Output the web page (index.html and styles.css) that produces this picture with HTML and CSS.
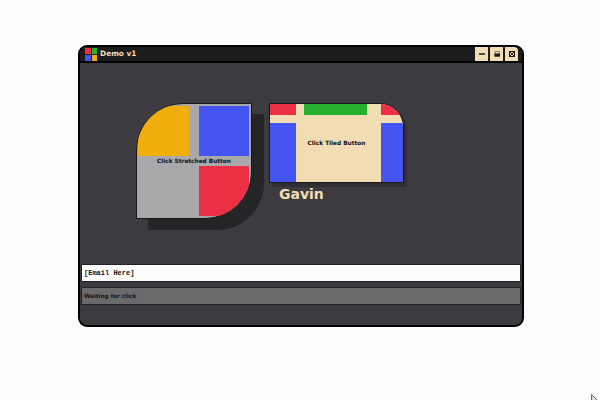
FILE: index.html
```
<!DOCTYPE html>
<html lang="en">
<head>
<meta charset="utf-8">
<title>Demo v1</title>
<link rel="stylesheet" href="styles.css">
</head>
<body>
<main class="window">
  <header class="titlebar">
    <span class="logo"><i class="red"></i><i class="green"></i><i class="blue"></i><i class="yellow"></i></span>
    <h1 class="title">Demo v1</h1>
    <div class="controls">
      <button class="control" aria-label="Minimize"><svg width="12" height="12" viewBox="0 0 12 12"><path d="M3 6h6" stroke="#1b1a18" stroke-width="1.6"/></svg></button>
      <button class="control" aria-label="Restore"><svg width="12" height="12" viewBox="0 0 12 12"><path d="M4 3.5h4.5v5H4z" fill="none" stroke="#8a7f69"/><path d="M3.5 5.5h5.5v3H3.5z" fill="#1b1a18"/></svg></button>
      <button class="control" aria-label="Close"><svg width="12" height="12" viewBox="0 0 12 12"><path d="M3.5 3.5h5v5h-5zM3 3l6 6M9 3l-6 6" fill="none" stroke="#1b1a18"/></svg></button>
    </div>
  </header>
  <section class="stage">
    <button class="stretched">
      <span class="yellow"></span><span class="blue"></span>
      <span class="caption">Click Stretched Button</span>
      <span></span><span class="red"></span>
    </button>
    <div class="column">
      <button class="tiled">
        <span class="red"></span><span class="green"></span><span class="red"></span>
        <span class="blue"></span><span class="caption">Click Tiled Button</span><span class="blue"></span>
      </button>
      <p class="name">Gavin</p>
    </div>
  </section>
  <div class="email">[Email Here]</div>
  <div class="status">Waiting for click</div>
</main>
<svg class="cursor" width="9" height="7" viewBox="0 0 9 7"><path d="M.5 7V.5L7 7" fill="#ddd" stroke="#666"/></svg>
</body>
</html>
```
FILE: styles.css
```
* {
  box-sizing: border-box;
}

body {
  margin: 0;
  height: 400px;
  padding: 45px 76px 0 78px;
  overflow: hidden;
  background: #fefdfe;
  font-family: "DejaVu Sans", sans-serif;
}

button {
  margin: 0;
  padding: 0;
  border: 0;
  font: inherit;
  color: inherit;
}

.red { background: #ec2f43; }
.green { background: #25b12e; }
.blue { background: #4555f1; }
.yellow { background: #f0ae0d; }

.window {
  height: 282px;
  border: 2px solid #020202;
  border-radius: 9px;
  background: #3e3b40;
  overflow: hidden;
}

.titlebar {
  display: flex;
  align-items: center;
  height: 16px;
  padding: 0 4px 0 5px;
  background: #1c1c1c;
  border-bottom: 2px solid #020202;
}

.logo {
  display: grid;
  grid-template-columns: 6px 5px;
  grid-template-rows: 6px 6px;
  gap: 1px;
}

.title {
  margin: 0 auto 0 3px;
  font-size: 7.4px;
  line-height: 14px;
  color: #f3ddb5;
}

.controls {
  display: flex;
  gap: 2px;
}

.control {
  display: grid;
  place-items: center;
  width: 13px;
  height: 14px;
  background: #f3ddb5;
}

.control:last-child {
  border-top-right-radius: 4px;
}

.stage {
  display: flex;
  align-items: flex-start;
  gap: 17px;
  height: 201px;
  padding: 40px 0 0 56px;
}

.stretched {
  display: grid;
  grid-template-columns: 51px 50px;
  grid-template-rows: 50px 10px 50px;
  column-gap: 10px;
  width: 116px;
  height: 116px;
  padding: 2px 1px;
  border: 1px solid #161616;
  border-radius: 47px 0 47px 0;
  background: #a9a8aa;
  box-shadow: 12px 11px #252427;
  overflow: hidden;
}

.caption {
  font-size: 5.8px;
  font-weight: bold;
  line-height: 10px;
  text-align: center;
  white-space: nowrap;
  color: #111;
}

.stretched .caption {
  grid-column: 1 / -1;
  padding-left: 1px;
}

.column {
  width: 135px;
}

.tiled {
  display: grid;
  grid-template-columns: 26px 63px 22px;
  grid-template-rows: 11px 59px;
  justify-content: space-between;
  row-gap: 8px;
  width: 135px;
  height: 80px;
  border: 1px solid #161616;
  border-radius: 0 24px 0 0;
  background: #f2dcb4;
  box-shadow: 3px 4px #302e32;
  overflow: hidden;
}

.tiled .green {
  margin: 0 3px 0 -3px;
}

.tiled .caption {
  padding-top: 15px;
  margin: 0 -8px 0 -12px;
}

.name {
  margin: 2px 0 0 10px;
  font-size: 14px;
  font-weight: bold;
  line-height: 18px;
  color: #f3ddb5;
}

.email,
.status {
  height: 18px;
  margin: 0 1px 5px;
  padding-left: 2px;
  border: 1px solid #222124;
  line-height: 16px;
  color: #141414;
}

.email {
  background: #fefefe;
  font-family: "Liberation Mono", monospace;
  font-size: 7px;
  font-weight: bold;
}

.status {
  background: #6a696b;
  font-size: 5.7px;
  font-weight: bold;
}

.cursor {
  position: absolute;
  left: 591px;
  top: 394px;
}
```
